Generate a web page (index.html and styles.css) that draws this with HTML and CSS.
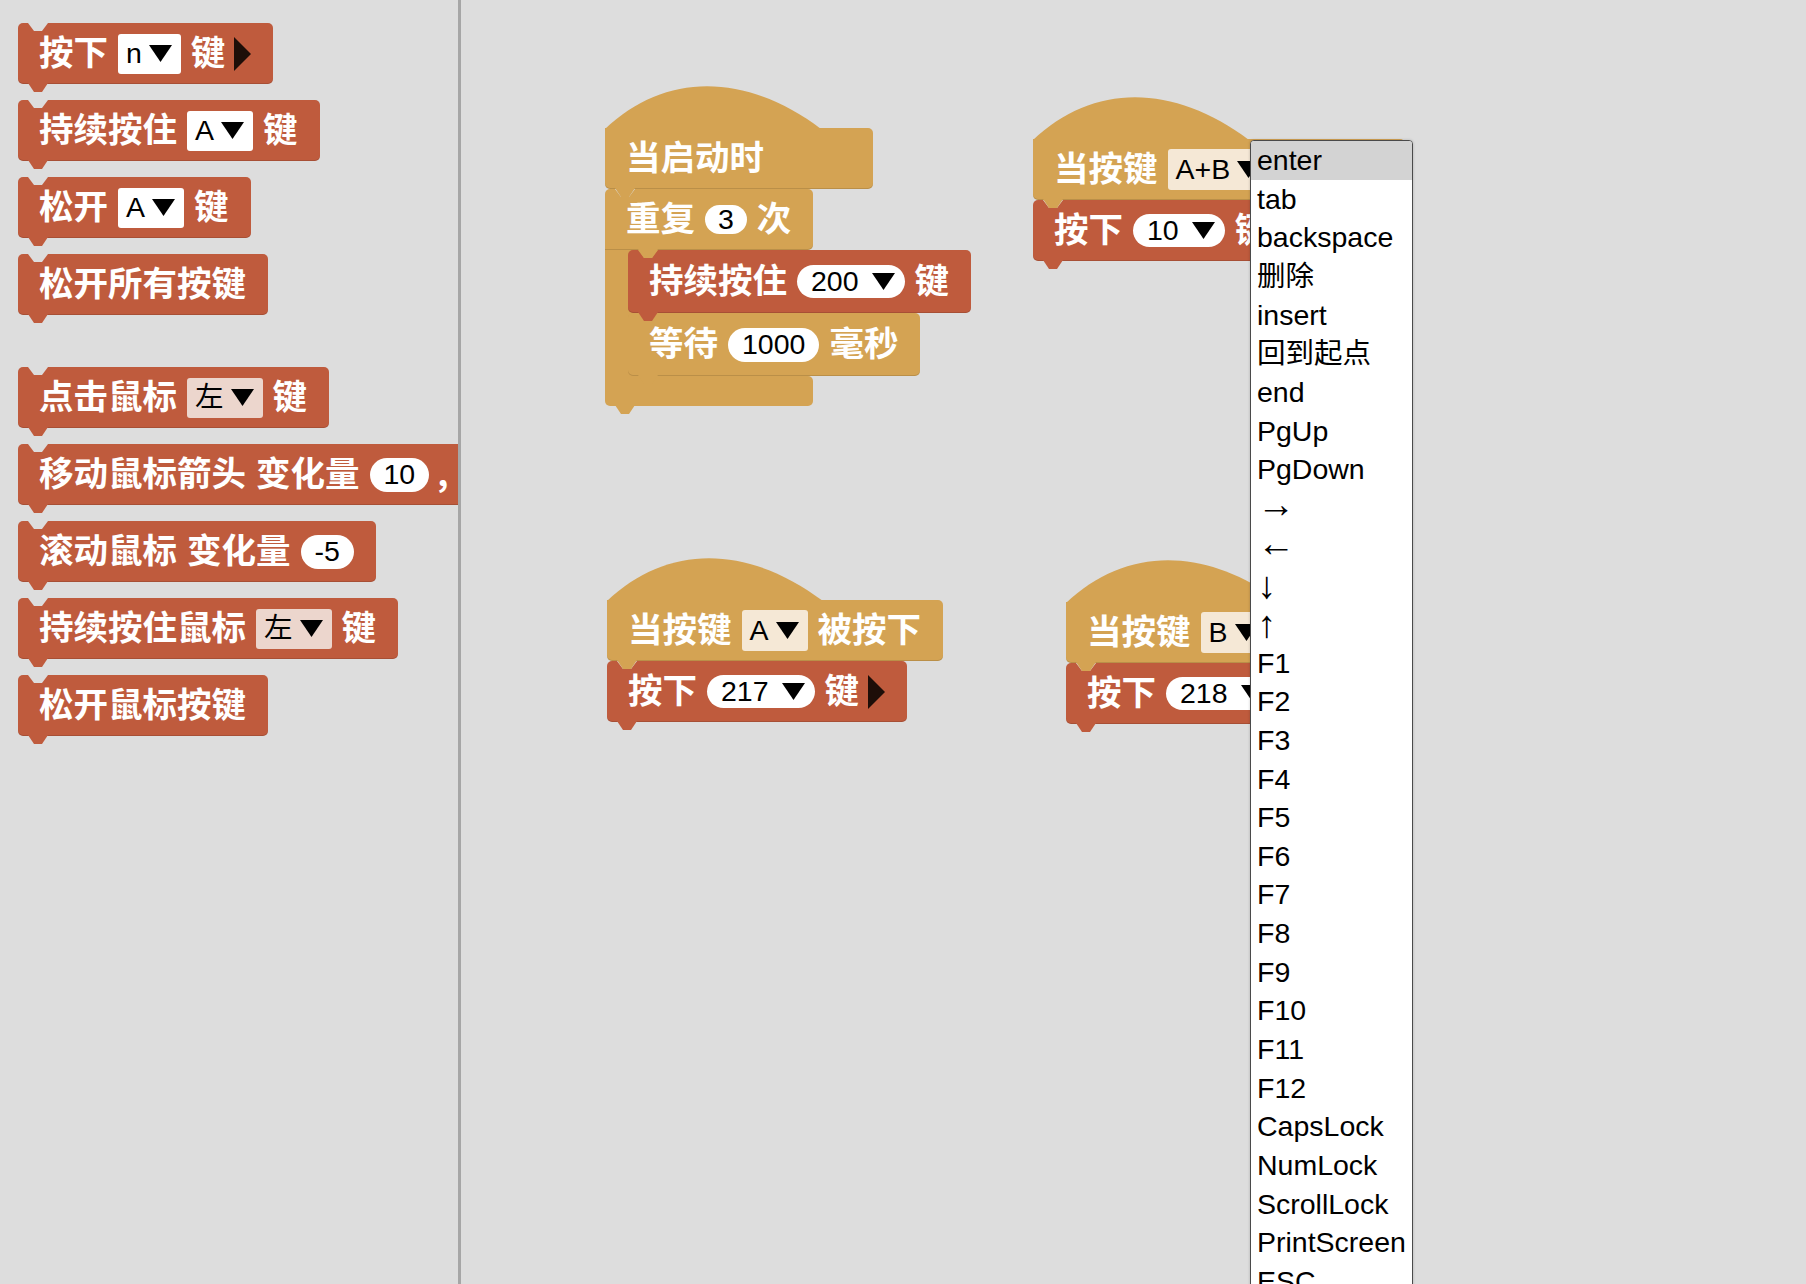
FILE: index.html
```html
<!DOCTYPE html>
<html lang="zh">
<head>
<meta charset="utf-8">
<title>Blocks</title>
<link rel="stylesheet" href="styles.css">
</head>
<body>
<div class="app">
  <aside class="flyout">
    <div class="blk red">
      <span class="lbl">按下</span>
      <span class="dd"><span class="v">n</span><svg class="tri" viewBox="0 0 23 17"><path d="M0 0H23L11.5 17Z"/></svg></span>
      <span class="lbl">键</span>
      <svg class="play" viewBox="0 0 17 34"><path d="M0 0L17 17L0 34Z"/></svg>
    </div>
    <div class="blk red">
      <span class="lbl">持续按住</span>
      <span class="dd"><span class="v">A</span><svg class="tri" viewBox="0 0 23 17"><path d="M0 0H23L11.5 17Z"/></svg></span>
      <span class="lbl">键</span>
    </div>
    <div class="blk red">
      <span class="lbl">松开</span>
      <span class="dd"><span class="v">A</span><svg class="tri" viewBox="0 0 23 17"><path d="M0 0H23L11.5 17Z"/></svg></span>
      <span class="lbl">键</span>
    </div>
    <div class="blk red">
      <span class="lbl">松开所有按键</span>
    </div>
    <div class="blk red group-start">
      <span class="lbl">点击鼠标</span>
      <span class="dd pink"><span class="v">左</span><svg class="tri" viewBox="0 0 23 17"><path d="M0 0H23L11.5 17Z"/></svg></span>
      <span class="lbl">键</span>
    </div>
    <div class="blk red">
      <span class="lbl">移动鼠标箭头</span>
      <span class="lbl">变化量</span>
      <span class="pill"><span class="v">10</span></span>
      <span class="lbl comma">,</span>
      <span class="pill"><span class="v">10</span></span>
    </div>
    <div class="blk red">
      <span class="lbl">滚动鼠标</span>
      <span class="lbl">变化量</span>
      <span class="pill"><span class="v">-5</span></span>
    </div>
    <div class="blk red">
      <span class="lbl">持续按住鼠标</span>
      <span class="dd pink"><span class="v">左</span><svg class="tri" viewBox="0 0 23 17"><path d="M0 0H23L11.5 17Z"/></svg></span>
      <span class="lbl">键</span>
    </div>
    <div class="blk red">
      <span class="lbl">松开鼠标按键</span>
    </div>
  </aside>

  <main class="workspace">
    <!-- stack: 当启动时 -->
    <div class="stack stack-start">
      <div class="blk tan hat">
        <svg class="cap" viewBox="0 0 216 44" preserveAspectRatio="none"><path d="M0 44C60 -13 140 -13 216 44Z"/></svg>
        <span class="lbl">当启动时</span>
      </div>
      <div class="cblk">
        <div class="blk tan c-top">
          <span class="lbl">重复</span>
          <span class="pill sm"><span class="v">3</span></span>
          <span class="lbl">次</span>
        </div>
        <div class="c-mouth">
          <div class="c-arm"></div>
          <div class="c-inner">
            <div class="blk red">
              <span class="lbl">持续按住</span>
              <span class="pill pdd"><span class="v">200</span><svg class="tri" viewBox="0 0 23 17"><path d="M0 0H23L11.5 17Z"/></svg></span>
              <span class="lbl">键</span>
            </div>
            <div class="blk tan">
              <span class="lbl">等待</span>
              <span class="pill"><span class="v">1000</span></span>
              <span class="lbl">毫秒</span>
            </div>
          </div>
        </div>
        <div class="c-bottom"></div>
      </div>
    </div>

    <!-- stack: 当按键 A+B -->
    <div class="stack stack-ab">
      <div class="blk tan hat">
        <svg class="cap" viewBox="0 0 216 44" preserveAspectRatio="none"><path d="M0 44C60 -13 140 -13 216 44Z"/></svg>
        <span class="lbl">当按键</span>
        <span class="dd beige"><span class="v">A+B</span><svg class="tri" viewBox="0 0 23 17"><path d="M0 0H23L11.5 17Z"/></svg></span>
        <span class="lbl">被按下</span>
      </div>
      <div class="blk red">
        <span class="lbl">按下</span>
        <span class="pill pdd"><span class="v">10</span><svg class="tri" viewBox="0 0 23 17"><path d="M0 0H23L11.5 17Z"/></svg></span>
        <span class="lbl">键</span>
        <svg class="play" viewBox="0 0 17 34"><path d="M0 0L17 17L0 34Z"/></svg>
      </div>
    </div>

    <!-- stack: 当按键 A -->
    <div class="stack stack-a">
      <div class="blk tan hat">
        <svg class="cap" viewBox="0 0 216 44" preserveAspectRatio="none"><path d="M0 44C60 -13 140 -13 216 44Z"/></svg>
        <span class="lbl">当按键</span>
        <span class="dd beige"><span class="v">A</span><svg class="tri" viewBox="0 0 23 17"><path d="M0 0H23L11.5 17Z"/></svg></span>
        <span class="lbl">被按下</span>
      </div>
      <div class="blk red">
        <span class="lbl">按下</span>
        <span class="pill pdd"><span class="v">217</span><svg class="tri" viewBox="0 0 23 17"><path d="M0 0H23L11.5 17Z"/></svg></span>
        <span class="lbl">键</span>
        <svg class="play" viewBox="0 0 17 34"><path d="M0 0L17 17L0 34Z"/></svg>
      </div>
    </div>

    <!-- stack: 当按键 B -->
    <div class="stack stack-b">
      <div class="blk tan hat">
        <svg class="cap" viewBox="0 0 216 44" preserveAspectRatio="none"><path d="M0 44C60 -13 140 -13 216 44Z"/></svg>
        <span class="lbl">当按键</span>
        <span class="dd beige"><span class="v">B</span><svg class="tri" viewBox="0 0 23 17"><path d="M0 0H23L11.5 17Z"/></svg></span>
        <span class="lbl">被按下</span>
      </div>
      <div class="blk red">
        <span class="lbl">按下</span>
        <span class="pill pdd"><span class="v">218</span><svg class="tri" viewBox="0 0 23 17"><path d="M0 0H23L11.5 17Z"/></svg></span>
        <span class="lbl">键</span>
        <svg class="play" viewBox="0 0 17 34"><path d="M0 0L17 17L0 34Z"/></svg>
      </div>
    </div>

    <!-- dropdown menu -->
    <div class="menu">
      <div class="it sel">enter</div>
      <div class="it">tab</div>
      <div class="it">backspace</div>
      <div class="it">删除</div>
      <div class="it">insert</div>
      <div class="it">回到起点</div>
      <div class="it">end</div>
      <div class="it">PgUp</div>
      <div class="it">PgDown</div>
      <div class="it arr"><span class="ah">→</span></div>
      <div class="it arr"><span class="ah">←</span></div>
      <div class="it arr">↓</div>
      <div class="it arr">↑</div>
      <div class="it">F1</div>
      <div class="it">F2</div>
      <div class="it">F3</div>
      <div class="it">F4</div>
      <div class="it">F5</div>
      <div class="it">F6</div>
      <div class="it">F7</div>
      <div class="it">F8</div>
      <div class="it">F9</div>
      <div class="it">F10</div>
      <div class="it">F11</div>
      <div class="it">F12</div>
      <div class="it">CapsLock</div>
      <div class="it">NumLock</div>
      <div class="it">ScrollLock</div>
      <div class="it">PrintScreen</div>
      <div class="it">ESC</div>
    </div>
  </main>
</div>
</body>
</html>
```
FILE: styles.css
```css
html, body {
  margin: 0;
  height: 100%;
  overflow: hidden;
  background: #dddddd;
}

.app {
  display: flex;
  height: 1284px;
}

/* ---------- flyout ---------- */
.flyout {
  width: 461px;
  flex: none;
  box-sizing: border-box;
  border-right: 3px solid #a6a6a6;
  padding: 23px 0 0 18px;
  display: flex;
  flex-direction: column;
  align-items: flex-start;
  gap: 16px;
  overflow: hidden;
}

.flyout .group-start {
  margin-top: 36px;
}

/* ---------- workspace ---------- */
.workspace {
  position: relative;
  flex: 1;
  overflow: hidden;
}

.stack {
  position: absolute;
}
.stack-start { left: 144px; top: 128px; }
.stack-ab    { left: 572px; top: 139px; }
.stack-a     { left: 146px; top: 600px; }
.stack-b     { left: 605px; top: 602px; }

/* ---------- blocks ---------- */
.blk {
  --c: #bf5b3d;
  position: relative;
  display: flex;
  align-items: center;
  gap: 10px;
  height: 61px;
  box-sizing: border-box;
  padding: 0 22px 0 21px;
  background: var(--c);
  border-radius: 5px;
  white-space: nowrap;
  width: max-content;
  flex: none;
  box-shadow: inset 0 -1px 0 rgba(0, 0, 0, 0.12);
}
.blk.tan { --c: #d4a353; }

/* notch cut into the top */
.blk::before {
  content: "";
  position: absolute;
  top: 0;
  left: 10px;
  width: 20px;
  height: 8px;
  background: var(--under, #dddddd);
  clip-path: polygon(0 0, 100% 0, 70% 100%, 30% 100%);
  z-index: 1;
}
/* tab below */
.blk::after {
  content: "";
  position: absolute;
  top: calc(100% - 1px);
  left: 10px;
  width: 20px;
  height: 9px;
  background: var(--c);
  clip-path: polygon(0 0, 100% 0, 70% 100%, 30% 100%);
  z-index: 2;
}

.lbl {
  font-family: "Noto Sans CJK SC", "Liberation Sans", sans-serif;
  font-weight: 700;
  font-size: 34.5px;
  line-height: 1;
  color: #ffffff;
  position: relative;
  top: -3px;
}
.lbl.comma {
  margin-left: -2px;
}

.v {
  font-family: "Liberation Sans", "Noto Sans CJK SC", sans-serif;
  font-weight: 400;
  font-size: 28.5px;
  line-height: 1;
  color: #000000;
}

.tri {
  width: 23px;
  height: 17px;
  flex: none;
  fill: #000000;
}

.play {
  width: 17px;
  height: 34px;
  flex: none;
  fill: #1e0e08;
  margin-left: -1px;
}

/* rectangular dropdown field */
.dd {
  display: flex;
  align-items: center;
  gap: 7px;
  height: 40px;
  box-sizing: border-box;
  padding: 0 9px 0 8px;
  background: #ffffff;
  border-radius: 3px;
}
.dd.pink { background: #ecd6cd; }
.dd.beige { background: #f5e8d6; height: 41px; }

/* rounded number field */
.pill {
  display: flex;
  align-items: center;
  height: 34px;
  box-sizing: border-box;
  padding: 0 14px;
  background: #ffffff;
  border-radius: 17px;
}
.pill.sm {
  height: 29px;
  padding: 0 13px;
  border-radius: 15px;
}
.pill.pdd {
  height: 33px;
  padding: 0 10px 0 14px;
  gap: 13px;
}

/* ---------- hat blocks ---------- */
.hat {
  border-top-left-radius: 0;
  min-width: 268px;
}
.hat::before {
  display: none;
}
.cap {
  position: absolute;
  left: 0;
  top: -43px;
  width: 216px;
  height: 44px;
  fill: var(--c);
}

/* ---------- C-shaped repeat block ---------- */
.cblk {
  --c: #d4a353;
  position: relative;
  width: max-content;
}
.c-top {
  border-bottom-left-radius: 0;
}
.c-top::after {
  left: 33px;
}
.c-mouth {
  display: flex;
}
.c-arm {
  width: 23px;
  flex: none;
  background: var(--c);
}
.c-inner {
  --under: #d4a353;
  display: flex;
  flex-direction: column;
  background: linear-gradient(#d4a353, #d4a353) left top / 6px 100% no-repeat;
}
.c-inner .blk {
  height: 63px;
}
.c-bottom {
  position: relative;
  width: 208px;
  height: 30px;
  background: var(--c);
  border-radius: 0 5px 5px 5px;
}
.c-bottom::after {
  content: "";
  position: absolute;
  top: calc(100% - 1px);
  left: 10px;
  width: 20px;
  height: 9px;
  background: var(--c);
  clip-path: polygon(0 0, 100% 0, 70% 100%, 30% 100%);
  z-index: 2;
}

/* ---------- dropdown menu ---------- */
.menu {
  position: absolute;
  left: 789px;
  top: 140px;
  width: 163px;
  box-sizing: border-box;
  border: 1px solid #4a4a4a;
  border-radius: 4px;
  background: #ffffff;
  z-index: 10;
  box-shadow: 0 0 3px rgba(0, 0, 0, 0.2);
  font-family: "Liberation Sans", "Noto Sans CJK SC", sans-serif;
  font-size: 28.5px;
  color: #000000;
  overflow: hidden;
}
.menu .it {
  height: 38.67px;
  line-height: 38.67px;
  padding-left: 6px;
  white-space: nowrap;
}
.menu .it.sel {
  background: #d3d3d3;
}
.menu .it.arr {
  font-size: 38px;
  line-height: 38.67px;
}
.menu .ah {
  position: relative;
  top: -4px;
}
```
